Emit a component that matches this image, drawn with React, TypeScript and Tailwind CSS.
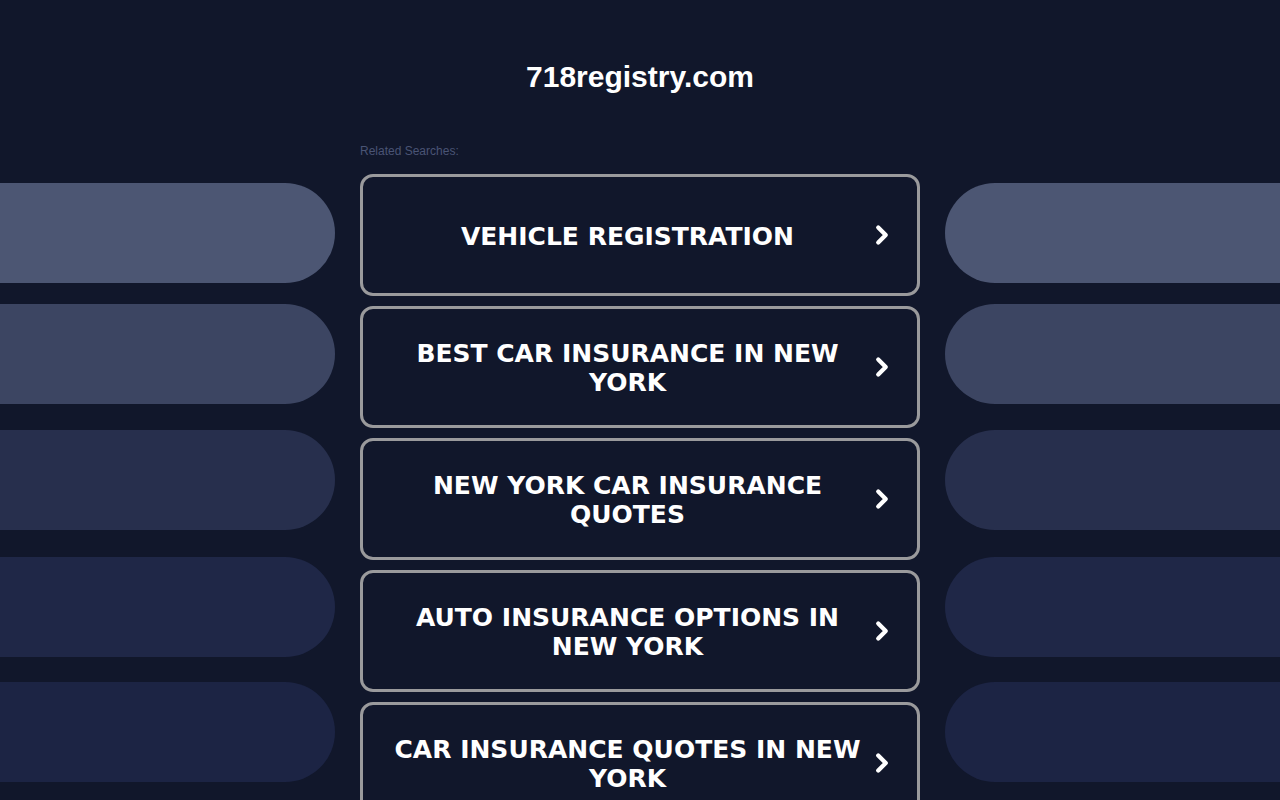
import { ChevronRight } from "lucide-react";

const searches = [
    "VEHICLE REGISTRATION",
    "BEST CAR INSURANCE IN NEW YORK",
    "NEW YORK CAR INSURANCE QUOTES",
    "AUTO INSURANCE OPTIONS IN NEW YORK",
    "CAR INSURANCE QUOTES IN NEW YORK",
];

// decorative side pills, top margin + colour
const pills = [
    { mt: "mt-0", bg: "bg-[#4c5673]" },
    { mt: "mt-[21px]", bg: "bg-[#3c4562]" },
    { mt: "mt-[26px]", bg: "bg-[#272f4d]" },
    { mt: "mt-[27px]", bg: "bg-[#1f2747]" },
    { mt: "mt-[25px]", bg: "bg-[#1c2444]" },
];

function SidePills({ side }: { side: "left" | "right" }) {
    return (
        <div className="flex flex-col pt-[52px] w-[335px] shrink-0">
            {pills.map((p, i) => (
                <div
                    key={i}
                    className={`${p.mt} ${p.bg} h-[100px] w-full ${
                        side === "left" ? "rounded-r-[50px]" : "rounded-l-[50px]"
                    }`}
                />
            ))}
        </div>
    );
}

export default function App() {
    return (
        <div className="h-[800px] overflow-hidden bg-[#11172b] font-['Liberation_Sans',Arial,sans-serif]">
            {/* Domain title */}
            <div className="pt-[60px] h-[131px] text-center">
                <h1 className="text-[30px] leading-[34px] font-bold text-white">
                    718registry.com
                </h1>
            </div>

            <div className="flex justify-between">
                <SidePills side="left" />

                {/* Related searches */}
                <div className="w-[560px] shrink-0 pt-[13px]">
                    <p className="text-[12px] leading-[14px] text-[#4a5475] mb-[16px]">
                        Related Searches:
                    </p>
                    <div className="flex flex-col gap-[10px]">
                        {searches.map((s) => (
                            <a
                                key={s}
                                href="#"
                                className="flex items-center h-[122px] border-[3px] border-[#9a9a9c] rounded-[13px] bg-[#11172b] pl-[27px] pr-[26px]"
                            >
                                <span className="flex-1 text-center text-white font-bold text-[25px] leading-[29px] pt-[2px] font-['DejaVu_Sans',Verdana,sans-serif]">
                                    {s}
                                </span>
                                <ChevronRight
                                    className="w-[30px] h-[36px] text-white ml-[2px] -mr-[6px]"
                                    strokeWidth={3.4}
                                />
                            </a>
                        ))}
                    </div>
                </div>

                <SidePills side="right" />
            </div>
        </div>
    );
}
